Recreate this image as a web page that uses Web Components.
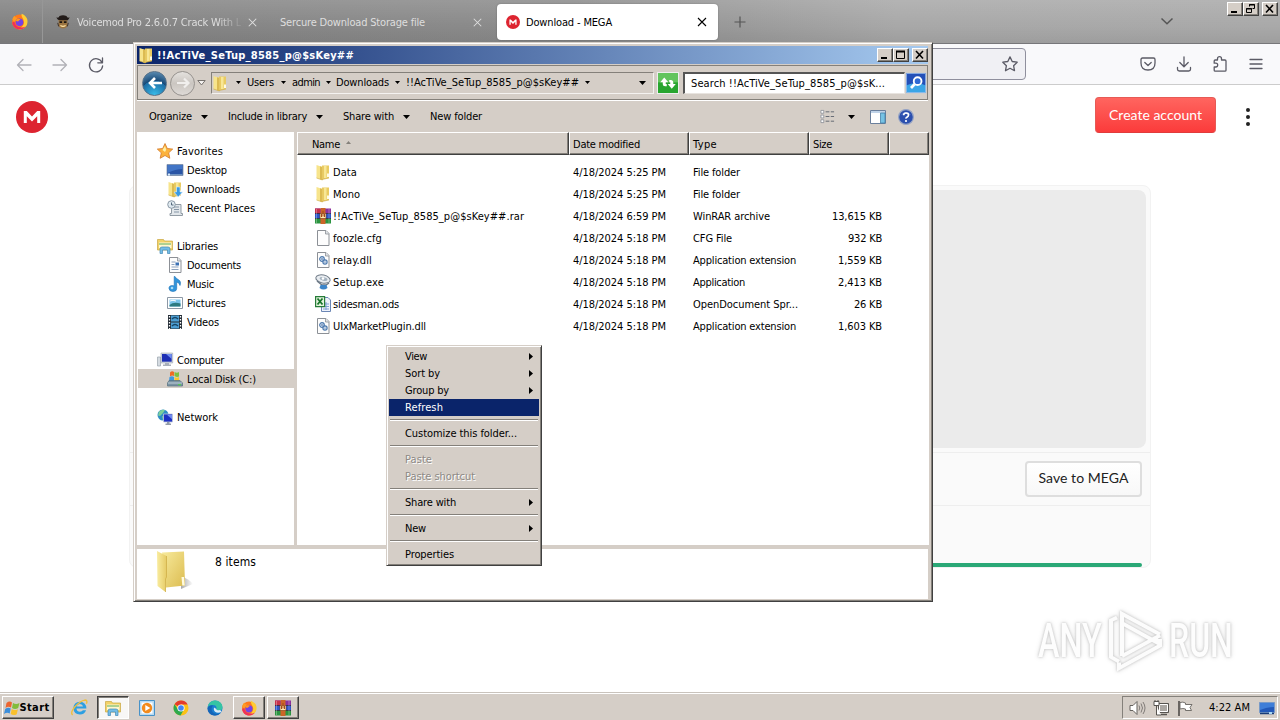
<!DOCTYPE html>
<html lang="en">
<head>
<meta charset="utf-8">
<title>Download - MEGA</title>
<style>
  :root {
    --face: #d5cec7;
    --face-shadow: #84807a;
    --face-dark: #404040;
    --select: #0a246a;
  }
  body {
    margin: 0;
    width: 1280px;
    height: 720px;
    overflow: hidden;
    position: relative;
    background: #fff;
    color: #000;
    font: 11px/14px "DejaVu Sans Condensed", "DejaVu Sans", sans-serif;
    font-stretch: condensed;
    display: flex;
    flex-direction: column;
  }
  explorer-window { position: absolute; left: 133px; top: 42px; z-index: 2; }
  context-menu { position: absolute; left: 386px; top: 345px; z-index: 3; }
  water-mark { position: absolute; left: 1038px; top: 607px; z-index: 1; }
</style>
</head>
<body>
  <browser-tabs></browser-tabs>
  <browser-toolbar></browser-toolbar>
  <mega-page></mega-page>
  <task-bar></task-bar>
  <explorer-window></explorer-window>
  <context-menu>
    <menu-item w="22" more>View</menu-item>
    <menu-item w="35" more>Sort by</menu-item>
    <menu-item w="44" more>Group by</menu-item>
    <menu-item w="38" active>Refresh</menu-item>
    <menu-line></menu-line>
    <menu-item w="112">Customize this folder...</menu-item>
    <menu-line></menu-line>
    <menu-item w="27" disabled>Paste</menu-item>
    <menu-item w="70" disabled>Paste shortcut</menu-item>
    <menu-line></menu-line>
    <menu-item w="51" more>Share with</menu-item>
    <menu-line></menu-line>
    <menu-item w="21" more>New</menu-item>
    <menu-line></menu-line>
    <menu-item w="49">Properties</menu-item>
  </context-menu>
  <water-mark></water-mark>

<script>
const FOLDER = `
  <path d="M7 1.500h7V14l-7 1.500z" fill="#e9cb62"/>
  <path d="M9 2h2.500v12H9z" fill="#f8e796"/>
  <path d="M1.500 1 7.500 3v13L1.500 14z" fill="#f7e48b"/>
  <path d="M5 2.200 7.500 3v13L5 15.200z" fill="#dcbb52"/>
  <path d="M1.500 14 7.500 16M7 15.500l7-1.500" stroke="#cba843" stroke-width=".6"/>
  <path d="M12 9.500h2v3.500h-2z" fill="#fffbe4"/>`;

const PAGE = `<path d="M2.500 .5h8.500l3 3v12H2.500z" fill="#fdfdfd" stroke="#8c9096"/><path d="M10.500.5v3.500h3.500" fill="#dfe3e8" stroke="#8c9096" stroke-width=".8"/>`;

const FIREFOX = `
  <circle cx="8" cy="8.500" r="7" fill="#ff7a1a"/>
  <path d="M10 .8c4.500 2 6.500 5.200 5.200 9.500-1 3.500-4.800 5.700-8.300 5C10 14 13 11 12 7.500 11.600 5 9.500 4 10 .8z" fill="#ffcc33"/>
  <path d="M1.300 6C2 3.500 3 3 3.500 2.500c.2 1.200 1 1.700 2.500 2L3 9z" fill="#ff9a22"/>
  <path d="M1.200 9c.4 4 3.400 6.500 7 6.500 2.300 0 4.300-1 5.500-2.800-4 2-9.500.8-10.500-4.700z" fill="#f0305a"/>
  <circle cx="8" cy="8.800" r="3.600" fill="#7542e5"/>
  <path d="M4.500 7c1-2 3.500-2 4.500-1-1.500.5-1.500 1.500-3 2z" fill="#ff9a22"/>`;

const WINRAR = `
  <path d="M0 .5h16v5H0z" fill="#8d2f9c"/><path d="M0 5.500h16v5H0z" fill="#2d55c8"/><path d="M0 10.500h16v5H0z" fill="#2b9440"/>
  <path d="M0 .5h5v5H0z" fill="#c5304c"/><path d="M0 5.500h16M0 10.500h16" stroke="#1b1b30" stroke-width=".7"/>
  <path d="M1.500 1v14M14 1v14" stroke="#ffffff" stroke-opacity=".3"/>
  <path d="M5.500 0h5v16h-5z" fill="#cc6428"/><path d="M5 5.500h6v5H5z" fill="#ffe9b0" stroke="#7a3610" stroke-width=".6"/>
  <path d="M6.500 6v3M8 3v5.500M9.500 6v3" stroke="#a2481a" stroke-width="1"/>`;

const LIBRARY = `
  <path d="M.5 1.500h6l1 1.500h8v9h-15z" fill="#f2d268" stroke="#c9a640" stroke-width=".7"/>
  <path d="M2 4.500h12.500v5.500H2z" fill="#fff7cf"/><path d="M2 6h12" stroke="#78b868" stroke-width="1.200"/>
  <path d="M3 15.500V11q0-2 2-2h6q2 0 2 2v4.500h-2.500V12h-5v3.500z" fill="#74bde6" stroke="#4289b8" stroke-width=".7"/>`;

const MEGA = `<circle cx="8" cy="8" r="8" fill="#dd2430"/><path d="M3.900 11V5h1.500L8 7.700 10.600 5h1.500v6h-1.500V7.600L8 10.200 5.400 7.600V11z" fill="#fff"/>`;

const GEAR_PAGE = PAGE + `
  <circle cx="7" cy="7" r="2.300" fill="#dbe7f5" stroke="#4d79ad" stroke-width="1.200"/><circle cx="7" cy="7" r=".8" fill="#355f94"/>
  <circle cx="10" cy="10" r="2.100" fill="#dbe7f5" stroke="#4d79ad" stroke-width="1.200"/><circle cx="10" cy="10" r=".6" fill="#355f94"/>`;

const LINE = 'fill="none" stroke="#5b5b66" stroke-width="1.300" stroke-linecap="round" stroke-linejoin="round"';

const ICONS = {
  folder: FOLDER,
  firefox: FIREFOX,
  winrar: WINRAR,
  library: LIBRARY,
  mega: MEGA,
  page: PAGE,
  dll: GEAR_PAGE,
  pirate: `<path d="M3 5.500h10v6.500q-1 3.500-5 3.500t-5-3.500z" fill="#9b7440"/><path d="M.5 2.500Q3 4 4 1q4-1.500 8 0 1 3 3.500 1.500-1 4-4 3.500h-7q-3 0-4-3.500z" fill="#221b19"/><path d="M4 7h3v2H4zM9 7h3v2H9z" fill="#17120e"/><path d="M5 12q3 2 6 0" stroke="#ffe3a2" stroke-width="1.200"/><path d="M2 9l1 4M14 9l-1 4" stroke="#33251c"/>`,
  back: `<path ${LINE} stroke-opacity=".45" d="M15 8H1.500M7 2.500 1.500 8 7 13.500"/>`,
  forward: `<path ${LINE} stroke-opacity=".45" d="M1 8h13.500M9 2.500 14.500 8 9 13.500"/>`,
  reload: `<path ${LINE} d="M14 5.500A6.600 6.600 0 1 0 14.600 9M14.500 1v4.800H9.800"/>`,
  star: `<path ${LINE} d="M8 .9l2.200 4.600 5 .7-3.600 3.500.9 5L8 12.300l-4.500 2.400.9-5L.8 6.200l5-.7z"/>`,
  pocket: `<path ${LINE} d="M2.500 2h11q1.500 0 1.500 1.500V7q0 7-7 7T1 7V3.500Q1 2 2.500 2zM4.800 6.500 8 9.500l3.200-3"/>`,
  download: `<path ${LINE} d="M8 .8v9.700M3.800 6.500 8 10.700l4.200-4.200M1.500 11.500v1.700q0 1.800 1.800 1.800h9.400q1.800 0 1.800-1.800v-1.700"/>`,
  puzzle: `<path ${LINE} d="M5.500 4V2.700a2 2 0 0 1 4 0V4H13q1 0 1 1v9.200q0 1-1 1H3.200q-1 0-1-1v-3.200h1.600a1.900 1.900 0 0 0 0-3.800H2.200V5q0-1 1-1z"/>`,
  lines: `<path ${LINE} d="M2 3.500h12M2 8h12M2 12.500h12"/>`,
  cross: `<path d="M4 4l8 8M12 4l-8 8" fill="none" stroke="currentColor" stroke-width="1.100"/>`,
  plus: `<path d="M8 2.500v11M2.500 8h11" fill="none" stroke="#555" stroke-width="1.200"/>`,
  chevron: `<path d="M2.500 5.500 8 10.700l5.500-5.200" fill="none" stroke="#555" stroke-width="1.500"/>`,
  favorite: `<path d="M8 .5l2.300 5 5.400.6-4 3.700 1.100 5.500L8 12.500l-4.800 2.800 1.100-5.500-4-3.700 5.400-.6z" fill="#fcb23c" stroke="#d3782a" stroke-width=".8"/><path d="M8 3 9.200 6.700 8 9 5.500 7z" fill="#fff1a8"/>`,
  desktop: `<path d="M0 2.500h16v11H0z" fill="#2a55a5" stroke="#7d8fa8" stroke-width=".8"/><path d="M.5 3h15v4q-7 0-15 4z" fill="#4275c6"/><path d="M.5 12.500h15" stroke="#6f93c2"/><path d="M1 11.500h2v2H1z" fill="#d8ecff"/>`,
  downloads: FOLDER + `<path d="M9.500 6h3.500v5h2.500l-4.300 5L7 11h2.500z" fill="#3a9ae4" stroke="#d5ecff" stroke-width=".6"/>`,
  recent: `<path d="M4.500 4.500h9.500v9h1.500v2H3v-2h1.500z" fill="#e2e7eb" stroke="#87929c" stroke-width=".9"/><path d="M7 7h5M7 9.500h5M7 12h5" stroke="#8797a7"/><circle cx="4.500" cy="4.500" r="3.800" fill="#e0eaf0" stroke="#8b99a6"/><path d="M4.500 2.500v2.500h2" fill="none" stroke="#55697c"/>`,
  documents: PAGE + `<path d="M4.500 5h4M4.500 7.500h3M4.500 10h7M4.500 12.500h7" stroke="#8ba1bd"/><path d="M8.500 5.500h3.500v3H8.500z" fill="#3b71b5"/>`,
  music: `<path d="M8 .5q.8 2 3.500 3.200Q14.500 5.500 13 9.500 12.500 6.500 9.700 6v6.500q0 3-3.700 3T2 12.500t3.500-3q1.300 0 1.700.4V.5z" fill="#3195dc" stroke="#1b70b5" stroke-width=".6"/><circle cx="5" cy="12" r="1.300" fill="#a5dcf8"/>`,
  pictures: `<path d="M.5 2.500h15v11H.5z" fill="#fff" stroke="#8c98a5"/><path d="M2.500 4.500h11v7h-11z" fill="#7cc4ea"/><path d="M2.500 10q4-3.500 11-1.500v3h-11z" fill="#2d7a80"/><path d="M3 6q3-1.500 6 0" stroke="#fff"/>`,
  videos: `<path d="M1 1h14v14H1z" fill="#252e37"/><path d="M4 1.500h8v6H4zM4 8.500h8v6H4z" fill="#4d9fd4"/><path d="M5 5q3-3 6 0M5 12q3-3 6 0" stroke="#174767" stroke-width="1.500" fill="none"/><path d="M2.500 2v13M13.500 2v13" stroke="#fff" stroke-width="1.300" stroke-dasharray="1.500 1.500"/>`,
  computer: `<path d="M.5 5h3v9h-3z" fill="#d5dbe1" stroke="#9aa3ac" stroke-width=".7"/><path d="M4 1h11.700v10H4z" fill="#d3d9e1" stroke="#a0a8b2" stroke-width=".6"/><path d="M5 2h9.700v7.700H5z" fill="#1d2fb4"/><path d="M9 2h5.700v5z" fill="#6f8df0"/><path d="M8 11h4v1.500h2V14H6v-1.500h2z" fill="#a9b0ba"/>`,
  disk: `<path d="M3 1.500q2-2 4-.5v4Q5 4 3 5.500z" fill="#f06b26"/><path d="M7.500 1Q10 2.500 12 1v4.500Q10 6.500 7.500 5z" fill="#7cc142"/><path d="M2.500 6Q5 4.500 7 6v4H2z" fill="#4098e0"/><path d="M7.500 6q2 1.500 4.500 0v4H7.500z" fill="#fbc72e"/><path d="M2 9.500h11l2.500 2.500v3H.5v-3z" fill="#7b93a3" stroke="#55707e" stroke-width=".7"/><path d="M1 12h14" stroke="#bfd0d9"/><path d="M11 13h3v1.300h-3z" fill="#52d04d"/>`,
  network: `<circle cx="6" cy="6" r="5.500" fill="#2f8ec6"/><path d="M2 2.500q3-2.500 6-1.500L6 4 3 7 1 6.500zM5 7l3 1-2 3.500z" fill="#7ccf9a"/><path d="M6.500 5h9v8h-9z" fill="#1d2fc4" stroke="#c3cbd8" stroke-width=".8"/><path d="M10 5.700h5v4.500z" fill="#718cf0"/><path d="M10 13h2.500v1.500H14V16H8.500v-1.500H10z" fill="#929ca8"/>`,
  setup: `<ellipse cx="8" cy="5" rx="7.300" ry="4" fill="#e9edf1" stroke="#727d89" transform="rotate(12 8 5)"/><ellipse cx="8.500" cy="4.800" rx="4" ry="1.800" fill="#a5b3c0" transform="rotate(12 8 5)"/><circle cx="8" cy="4.500" r="1.300" fill="#fff"/><path d="M2 7l5 4h4l3-2" fill="none" stroke="#6c7986" stroke-width="1.500"/><path d="M5.500 11h6l1 3q-4 3-8 0z" fill="#3c84c8"/>`,
  ods: `<path d="M6.500 1.500H13l2.500 2.500v11.500h-9z" fill="#eef2fb" stroke="#6b86b5"/><path d="M8 8h6M8 10.500h6M8 13h6M11 6v8" stroke="#7fa0d3"/><path d="M.6.600h9v10h-9z" fill="#e2f2dc" stroke="#267c38" stroke-width="1.200"/><path d="M2.500 2.500l5 6M7.500 2.500l-5 6" stroke="#18752a" stroke-width="1.800"/>`,
  views: `<path d="M1 1.500h3v3H1zM1 6.500h3v3H1zM1 11.500h3v3H1z" fill="#fff" stroke="#80858f" stroke-width=".8"/><path d="M6 3h4M11.500 3H15M6 8h4M11.500 8H15M6 13h4M11.500 13H15" stroke="#5f6570"/>`,
  pane: `<path d="M.5 1.500h15v13H.5z" fill="#fff" stroke="#6a7f9c"/><path d="M1 2h14v2H1z" fill="#c0d3e8"/><path d="M10.500 4h4.500v10h-4.500z" fill="#76c2e4" stroke="#4581a8" stroke-width=".8"/>`,
  help: `<circle cx="8" cy="8" r="7.400" fill="#2b4fae" stroke="#97a5c5" stroke-width="1.200"/><path d="M3 6q5-6 10 0-5-2-10 0z" fill="#6c8ad8"/><path d="M5.700 6.300q0-2.300 2.400-2.300t2.400 2q0 1.300-1.300 2T8 9.700" fill="none" stroke="#fff" stroke-width="1.700"/><circle cx="8" cy="12" r="1.100" fill="#fff"/>`,
  refresh: `<path d="M0 0h16v16H0z" fill="#28a52f"/><path d="M0 0h16v7.500H0z" fill="#62c45d"/><path d="M5 3.500 1.800 7.300h2v1.200q0 2 2 2h1.200V8.700H6.200V7.300h2z" fill="#fff"/><path d="M11 12.500l3.200-3.800h-2V7.500q0-2-2-2H9v1.800h.8v1.400h-2z" fill="#fff"/>`,
  search: `<path d="M0 0h16v16H0z" fill="#2450b8"/><path d="M0 10q8-4 16 0v6H0z" fill="#3ba5e6"/><circle cx="9.300" cy="6.500" r="3.100" fill="#2f6ad4" stroke="#fff" stroke-width="1.500"/><path d="M6.800 9 4 12" stroke="#fff" stroke-width="2.200"/><path d="M.3.3h15.400v15.400H.3z" stroke="#9fc0ec" stroke-width=".7"/>`,
  windows: `<path d="M2.500 3Q5.500.5 8 2.500L7 7.500Q4 6 1.500 8z" fill="#ec6530"/><path d="M9 3q3 2 6.500 0l-1.300 5Q11 10 8 8z" fill="#82bc3c"/><path d="M1.200 9Q4 7 6.700 8.500l-1 5Q3 12 0 14z" fill="#3b8edb"/><path d="M7.700 9q3 2 6.200.2l-1.200 5Q9.500 16 6.700 14z" fill="#f9c12e"/>`,
  ie: `<path d="M14.500 9H5.200q.3 3 3.200 3.100 2 0 2.800-1.400h3Q12.800 14.700 8.400 14.700 2.500 14.300 2.200 8.500 2.500 2.700 8.400 2.500q6 .3 6.100 6.500zM5.300 7h6Q11 4.900 8.400 4.800 5.700 4.900 5.300 7z" fill="#2c9fe2"/><path d="M1.500 15Q-1 13 3.500 7.500 9 1.500 13 1q3 0 1.500 3.500" fill="none" stroke="#efbf3d" stroke-width="1.300"/>`,
  player: `<path d="M.5 .5h15v15H.5z" fill="#b7daf2" stroke="#4892c8"/><path d="M2.500 2.500h11v11h-11z" fill="#fff"/><circle cx="8" cy="8" r="5.200" fill="#f28a1c"/><path d="M6.300 5v6l5-3z" fill="#fff"/>`,
  chrome: `<circle cx="8" cy="8" r="7.500" fill="#fbc116"/><path d="M8 8 1.500 4.300A7.500 7.500 0 0 1 14.700 4.600H8z" fill="#e33b2e"/><path d="M1.500 4.300A7.500 7.500 0 0 0 7.500 15.500L11 9.500 8 8 5 9.500z" fill="#2da94f"/><circle cx="8" cy="8" r="3.600" fill="#fff"/><circle cx="8" cy="8" r="2.800" fill="#4285f4"/>`,
  edge: `<circle cx="8" cy="8" r="7.500" fill="#1c7fd0"/><path d="M.6 7Q2 .5 8 .5q7 .5 7.500 6.500 0 3.500-4 3.500-2.500 0-2-1.500Q10 5 6 5 2 5 .6 7z" fill="#36c4a4"/><path d="M.5 8Q2 4.500 6 5.500 3 9 6 12.500q3 2.500 7.500.5Q11 16 7 15.500.5 14.500.5 8z" fill="#1565b8"/><path d="M7 7.500q-1 3.500 2.500 5 3 .5 5-.8L13.200 10Q9 11 9.400 9z" fill="#fff" fill-opacity=".85"/>`,
  volume: `<path d="M1 5.500h3L8 1.500v13l-4-4H1z" fill="#fff" stroke="#66635f"/><path d="M10 5.500q1.500 2.500 0 5M12 3.500q3 4.500 0 9M14 2q4 6 0 12" fill="none" stroke="#77736f" stroke-width=".9"/>`,
  wired: `<path d="M5.500 3.500h10v9h-10z" fill="#aaa6a2" stroke="#575450"/><path d="M6.500 4.500h8v7h-8z" fill="none" stroke="#fff"/><path d="M8 14.500h6" stroke="#575450" stroke-width="1.500"/><path d="M1 1.500h5v4H1zM3.500 5.500V15H8M2 0v2M5 0v2" fill="#fff" stroke="#575450"/>`,
  flag: `<path d="M2 1v15" stroke="#4e4b48" stroke-width="1.600"/><path d="M3 2.500q3-1 5.500.5v1.500h6.500l-2 3 1.500 3H8.500V9Q6 8 3 9z" fill="#fff" stroke="#66635f" stroke-width=".9"/>`,
  screen: `<path d="M.5 2.500h15v10H.5z" fill="#2258b8" stroke="#789ac8"/><path d="M1 3h14v4Q8 7 1 10z" fill="#3f7ed8"/><path d="M1 13.500h14" stroke="#183c78" stroke-width="1.500"/><path d="M10 12h3v2h-3z" fill="#a8d8f5"/>`
};

/** Icon from the set above, 16px unless size is given. */
class UiIcon extends HTMLElement {
  connectedCallback() {
    if (this.shadowRoot) return;
    const size = this.getAttribute('size') || 16;
    this.attachShadow({ mode: 'open' }).innerHTML = `
      <style>
        :host { display: inline-flex; flex: none; width: ${size}px; height: ${size}px; }
        svg { display: block; width: 100%; height: 100%; overflow: visible; }
      </style>
      <svg viewBox="0 0 16 16" fill="none">${ICONS[this.getAttribute('name')] || ''}</svg>`;
  }
}

/** Single line label, tracked so that it takes exactly w pixels. */
class FitText extends HTMLElement {
  connectedCallback() {
    if (this.shadowRoot) return;
    this.attachShadow({ mode: 'open' }).innerHTML = `
      <style>
        :host { display: inline-block; flex: none; white-space: nowrap; }
        span { display: inline-block; white-space: nowrap; }
      </style>
      <span><slot></slot></span>`;
    this.fit();
  }

  fit() {
    const w = Number(this.getAttribute('w'));
    const span = this.shadowRoot.querySelector('span');
    const natural = span.getBoundingClientRect().width;
    const count = this.textContent.trim().length;
    if (!w || !natural || !count) return;
    span.style.letterSpacing = `${(w - natural) / count}px`;
    this.style.width = `${w}px`;
  }
}

/** Small black arrow, dir = down | small | right | up. */
class UiArrow extends HTMLElement {
  connectedCallback() {
    if (this.shadowRoot) return;
    const shapes = {
      down: ['0 0 8 4', 'M0 0h7L3.500 4z'],
      small: ['0 0 5 3', 'M0 0h5L2.500 3z'],
      right: ['0 0 4 7', 'M0 0l4 3.500L0 7z'],
      up: ['0 0 5 3', 'M0 3h5L2.500 0z']
    };
    const [box, d] = shapes[this.getAttribute('dir') || 'down'];
    const [, , w, h] = box.split(' ');
    this.attachShadow({ mode: 'open' }).innerHTML = `
      <style>
        :host { display: block; flex: none; width: ${w}px; height: ${h}px; }
        svg { display: block; }
      </style>
      <svg width="${w}" height="${h}" viewBox="${box}"><path d="${d}" fill="currentColor"/></svg>`;
  }
}

/** Minimize, maximize / restore and close buttons of a classic window. */
class CaptionButtons extends HTMLElement {
  connectedCallback() {
    if (this.shadowRoot) return;
    const middle = this.hasAttribute('restore')
      ? '<path d="M5.500 3.500v-2h5v4h-2M5 2h6M2.500 5.500h5v4h-5zM2 6h6" fill="none" stroke="#000"/>'
      : '<path d="M2.500 2.500h8v7h-8zM2 2h9" fill="none" stroke="#000"/><path d="M2 2h9v1.500H2z" fill="#000"/>';
    this.attachShadow({ mode: 'open' }).innerHTML = `
      <style>
        :host { display: flex; flex: none; height: 14px; }
        b {
          box-sizing: border-box; width: 16px; height: 14px; background: var(--face);
          border: 1px solid; border-color: #fff #404040 #404040 #fff;
          box-shadow: inset -1px -1px #84807a;
        }
        b:last-child { margin-left: 3px; }
        svg { display: block; }
      </style>
      <b><svg width="13" height="12"><path d="M3 8h6v2H3z"/></svg></b>
      <b><svg width="13" height="12">${middle}</svg></b>
      <b><svg width="13" height="12"><path d="M3 2l7 7.500M10 2 3 9.500" stroke="#000" stroke-width="1.600"/></svg></b>`;
  }
}

class BrowserTabs extends HTMLElement {
  connectedCallback() {
    this.attachShadow({ mode: 'open' }).innerHTML = `
      <style>
        :host {
          display: flex; flex: none; box-sizing: border-box; height: 44px;
          border-bottom: 1px solid #77777a;
          background: linear-gradient(#fff2, #0000 60%, #0001), linear-gradient(90deg, #828282, #8c8c8c 45%, #a8a8a8 70%, #a9a9a9);
          color: #dedede;
        }
        .pin { width: 43px; display: flex; align-items: center; justify-content: center; border-right: 1px solid #979797; box-sizing: border-box; padding-right: 3px; }
        .tab { display: flex; align-items: center; box-sizing: border-box; margin: 4px 0; height: 36px; }
        .tab ui-icon:last-child { margin-left: auto; }
        .tab fit-text { padding-top: 2px; }
        .one { width: 223px; padding: 0 6px 0 13px; }
        .one fit-text { margin-left: 7px; overflow: hidden; -webkit-mask: linear-gradient(90deg, #000 86%, #0002); mask: linear-gradient(90deg, #000 86%, #0002); }
        .two { width: 225px; padding: 0 6px 0 14px; margin-right: 6px; }
        .on { width: 221px; background: #fff; color: #000; border-radius: 4px; padding: 0 8px 0 9px; box-shadow: 0 0 2px #0004; }
        .on fit-text { margin-left: 6px; }
        .add { margin: 14px 0 0 14px; }
        .list { margin: 13px 0 0 auto; }
        caption-buttons { margin: 2px 2px 0 52px; }
      </style>
      <div class="pin"><ui-icon name="firefox" size="17"></ui-icon></div>
      <div class="tab one"><ui-icon name="pirate" size="14"></ui-icon><fit-text w="164">Voicemod Pro 2.6.0.7 Crack With L</fit-text><ui-icon name="cross" size="15"></ui-icon></div>
      <div class="tab two"><fit-text w="145">Sercure Download Storage file</fit-text><ui-icon name="cross" size="15"></ui-icon></div>
      <div class="tab on"><ui-icon name="mega" size="14"></ui-icon><fit-text w="86">Download - MEGA</fit-text><ui-icon name="cross"></ui-icon></div>
      <ui-icon class="add" name="plus"></ui-icon>
      <ui-icon class="list" name="chevron"></ui-icon>
      <caption-buttons restore></caption-buttons>`;
  }
}

class BrowserToolbar extends HTMLElement {
  connectedCallback() {
    this.attachShadow({ mode: 'open' }).innerHTML = `
      <style>
        :host {
          display: flex; flex: none; align-items: center; box-sizing: border-box; height: 41px;
          padding: 0 16px; background: #f9f9fb; border-bottom: 1px solid #ccc;
        }
        .nav, .tools { display: flex; gap: 20px; }
        .nav { padding-top: 1px; }
        .url {
          flex: 1; box-sizing: border-box; height: 32px; margin: 0 114px 0 132px; padding-right: 7px;
          display: flex; align-items: center; justify-content: flex-end;
          border: 1px solid #8f8f9d; border-radius: 4px; background: #f0f0f4;
        }
      </style>
      <div class="nav"><ui-icon name="back"></ui-icon><ui-icon name="forward"></ui-icon><ui-icon name="reload"></ui-icon></div>
      <div class="url"><ui-icon name="star"></ui-icon></div>
      <div class="tools"><ui-icon name="pocket"></ui-icon><ui-icon name="download"></ui-icon><ui-icon name="puzzle"></ui-icon><ui-icon name="lines"></ui-icon></div>`;
  }
}

class MegaPage extends HTMLElement {
  connectedCallback() {
    this.attachShadow({ mode: 'open' }).innerHTML = `
      <style>
        :host { display: block; flex: 1; min-height: 0; background: #fff; font: 14px/18px Lato, sans-serif; }
        header { display: flex; align-items: center; height: 64px; padding: 0 30px 0 16px; }
        .create {
          margin-left: auto; box-sizing: border-box; width: 121px; height: 36px; margin-top: -4px; padding-bottom: 1px;
          display: flex; align-items: center; justify-content: center; border-radius: 4px;
          background: linear-gradient(#ff655f, #fb3b3b); border: 1px solid #e65a55; border-bottom-color: #e03c3c; color: #fff;
        }
        .dots { display: grid; gap: 3px; margin-left: 30px; }
        .dots i { width: 4px; height: 4px; border-radius: 2px; background: #222; }
        main { box-sizing: border-box; width: 1022px; height: 383px; margin: 36px 0 0 129px; border: 1px solid #f2f2f2; border-radius: 8px; background: #fafafa; display: flex; flex-direction: column; overflow: hidden; }
        .preview { height: 258px; margin: 4px 4px 4px; border-radius: 8px; background: #ebebeb; flex: none; }
        .actions { height: 52px; border: solid #eee; border-width: 1px 0; display: flex; align-items: center; justify-content: flex-end; padding-right: 8px; flex: none; }
        .save { box-sizing: border-box; width: 117px; height: 36px; padding-bottom: 2px; display: flex; align-items: center; justify-content: center; border: 2px solid #dedede; border-radius: 4px; background: linear-gradient(#fff, #f8f8f8); color: #222; }
        .bar { height: 4px; margin: auto 8px 0; border-radius: 2px; background: #2aa876; }
      </style>
      <header>
        <ui-icon name="mega" size="32"></ui-icon>
        <div class="create"><fit-text w="93">Create account</fit-text></div>
        <div class="dots"><i></i><i></i><i></i></div>
      </header>
      <main>
        <div class="preview"></div>
        <div class="actions"><div class="save"><fit-text w="90">Save to MEGA</fit-text></div></div>
        <div class="bar"></div>
      </main>`;
  }
}

/** Entry of the explorer's navigation tree. */
class NavItem extends HTMLElement {
  connectedCallback() {
    const w = this.getAttribute('w');
    this.attachShadow({ mode: 'open' }).innerHTML = `
      <style>
        :host { display: flex; align-items: center; box-sizing: border-box; height: 19px; margin-left: 1px; padding-left: 19px; gap: 4px; }
        :host([child]) { padding-left: 29px; }
        :host([selected]) { background: var(--face); }
        :host([group]) { margin-top: 19px; }
        fit-text { padding-top: 2px; }
      </style>
      <ui-icon name="${this.getAttribute('icon')}"></ui-icon>
      <fit-text w="${w}">${this.textContent}</fit-text>`;
  }
}

/** Row of the file list: name, date, type and size. */
class FileRow extends HTMLElement {
  connectedCallback() {
    const at = (name) => this.getAttribute(name) || '';
    this.attachShadow({ mode: 'open' }).innerHTML = `
      <style>
        :host { display: grid; grid-template-columns: 276px 120px 120px 69px; align-items: center; height: 22px; }
        .name { display: flex; align-items: center; padding-left: 18px; gap: 2px; }
        .size { justify-self: end; }
        fit-text { padding-top: 2px; }
      </style>
      <div class="name"><ui-icon name="${at('icon')}"></ui-icon><fit-text w="${at('w')}">${this.textContent}</fit-text></div>
      <fit-text w="93">${at('date')}</fit-text>
      <fit-text w="${at('tw')}">${at('type')}</fit-text>
      ${at('size') ? `<fit-text class="size" w="${at('sw')}">${at('size')}</fit-text>` : ''}`;
  }
}

class ExplorerWindow extends HTMLElement {
  connectedCallback() {
    this.attachShadow({ mode: 'open' }).innerHTML = `
      <style>
        :host {
          display: flex; flex-direction: column; box-sizing: border-box; width: 800px; height: 560px;
          padding: 2px 2px 1px; background: var(--face); border: 1px solid;
          border-color: var(--face) var(--face-dark) var(--face-dark) var(--face);
          box-shadow: inset 1px 1px #fff, inset -1px -1px #84807a;
        }
        .title {
          height: 18px; margin: 1px 2px 0 1px; padding: 0 0 0 1px; display: flex; align-items: center;
          background: linear-gradient(90deg, #0a246a, #a6caf0); color: #fff; font-weight: bold;
        }
        .title fit-text { margin-left: 3px; padding-top: 1px; }
        caption-buttons { margin-left: auto; }
        .address {
          box-sizing: border-box; height: 35px; margin: 1px 2px 0 1px; padding: 0 0 0 4px; display: flex; align-items: center;
          border: 1px solid #84807a; box-shadow: 0 1px #fff;
        }
        .round { box-sizing: border-box; width: 25px; height: 25px; margin-top: 1px; border-radius: 50%; flex: none; display: grid; place-items: center; border: 1px solid #557088; }
        .go { background: radial-gradient(circle at 50% 100%, #39bdea, #1d6ca4 55%, #184a78 56%, #6c9cc0); }
        .no { margin-left: 3px; background: linear-gradient(#e4e1de, #cbc6c1 50%, #dedad6); border-color: #96928e; }
        .tri { margin-left: 2px; color: #777; flex: none; }
        .crumbs {
          box-sizing: border-box; width: 443px; height: 22px; margin-left: 5px; padding: 0 6px 0 0; display: flex; align-items: center;
          border: 1px solid; border-color: #84807a #f4f2f0 #f4f2f0 #84807a;
        }
        .crumbs ui-icon { margin-right: 1px; }
        .crumbs ui-arrow { margin: 0 6px; }
        .crumbs ui-arrow.end { margin: 0 0 0 auto; }
        .refresh { margin-left: 3px; border: 1px solid #eee; }
        .query {
          box-sizing: border-box; width: 222px; height: 22px; margin-left: 4px; padding-left: 6px; display: flex; align-items: center; background: #fff;
          border: solid; border-width: 2px 1px 1px 2px; border-color: #555 #e8e4e0 #e8e4e0 #555;
        }
        .query fit-text { padding-top: 1px; }
        .find { margin-left: 1px; }
        .commands { height: 31px; display: flex; align-items: center; padding: 1px 16px 0 13px; flex: none; }
        .commands fit-text + ui-arrow { margin: 0 19px 0 9px; }
        .views { margin-left: auto; }
        .commands ui-icon + ui-arrow { margin: 0 14px 0 13px; }
        .help { margin-left: 12px; }
        .body { display: flex; flex: 1; min-height: 0; margin: 0 2px 0 1px; }
        nav { width: 157px; background: #fff; flex: none; padding-top: 9px; box-sizing: border-box; }
        .files { flex: 1; margin-left: 3px; background: #fff; }
        .head { display: grid; grid-template-columns: 272px 120px 120px 80px 40px; height: 23px; }
        .head div {
          box-sizing: border-box; display: flex; align-items: center; padding: 2px 0 0 3px; background: var(--face);
          border: 1px solid; border-color: #fff var(--face-dark) var(--face-dark) #fff; box-shadow: inset -1px -1px #84807a;
        }
        .head div:first-child { padding-left: 14px; }
        .head ui-arrow { margin: -4px 0 0 6px; color: #84807a; }
        .rows { padding-top: 6px; }
        .details { height: 50px; margin: 4px 2px 1px 1px; background: #fff; display: flex; flex: none; }
        .details svg { margin: 1px 0 0 16px; }
        .details fit-text { margin: 6px 0 0 20px; font-size: 12px; }
      </style>
      <div class="title"><ui-icon name="folder"></ui-icon><fit-text w="197">!!AcTiVe_SeTup_8585_p@$sKey##</fit-text><caption-buttons></caption-buttons></div>
      <div class="address">
        <div class="round go"><svg width="16" height="16"><path d="M15 8H3M8 3 3 8l5 5" fill="none" stroke="#fff" stroke-width="2.600"/></svg></div>
        <div class="round no"><svg width="16" height="16"><path d="M2 8h11M9 3.500 13.500 8 9 12.500" fill="none" stroke="#f1efed" stroke-width="2.200"/></svg></div>
        <svg class="tri" width="9" height="6"><path d="M.8.500h7.400L4.500 5z" fill="#f4f2f0" stroke="#77736f"/></svg>
        <div class="crumbs">
          <ui-icon name="folder"></ui-icon>
          <ui-arrow dir="small" style="margin-left:7px"></ui-arrow><fit-text w="27">Users</fit-text>
          <ui-arrow dir="small" style="margin-left:7px"></ui-arrow><fit-text w="28">admin</fit-text>
          <ui-arrow dir="small" style="margin-right:5px"></ui-arrow><fit-text w="53">Downloads</fit-text>
          <ui-arrow dir="small"></ui-arrow><fit-text w="173">!!AcTiVe_SeTup_8585_p@$sKey##</fit-text>
          <ui-arrow dir="small"></ui-arrow>
          <ui-arrow class="end"></ui-arrow>
        </div>
        <ui-icon class="refresh" name="refresh" size="20"></ui-icon>
        <div class="query"><fit-text w="194">Search !!AcTiVe_SeTup_8585_p@$sK...</fit-text></div>
        <ui-icon class="find" name="search" size="20"></ui-icon>
      </div>
      <div class="commands">
        <fit-text w="43">Organize</fit-text><ui-arrow></ui-arrow>
        <fit-text w="79">Include in library</fit-text><ui-arrow></ui-arrow>
        <fit-text w="51">Share with</fit-text><ui-arrow></ui-arrow>
        <fit-text w="52">New folder</fit-text>
        <ui-icon class="views" name="views" size="15"></ui-icon><ui-arrow></ui-arrow>
        <ui-icon name="pane"></ui-icon><ui-icon class="help" name="help"></ui-icon>
      </div>
      <div class="body">
        <nav>
          <nav-item icon="favorite" w="46">Favorites</nav-item>
          <nav-item child icon="desktop" w="40">Desktop</nav-item>
          <nav-item child icon="downloads" w="53">Downloads</nav-item>
          <nav-item child icon="recent" w="68">Recent Places</nav-item>
          <nav-item group icon="library" w="41">Libraries</nav-item>
          <nav-item child icon="documents" w="54">Documents</nav-item>
          <nav-item child icon="music" w="27">Music</nav-item>
          <nav-item child icon="pictures" w="39">Pictures</nav-item>
          <nav-item child icon="videos" w="32">Videos</nav-item>
          <nav-item group icon="computer" w="47">Computer</nav-item>
          <nav-item child selected icon="disk" w="69">Local Disk (C:)</nav-item>
          <nav-item group icon="network" w="41">Network</nav-item>
        </nav>
        <div class="files">
          <div class="head">
            <div><fit-text w="28">Name</fit-text><ui-arrow dir="up"></ui-arrow></div>
            <div><fit-text w="67">Date modified</fit-text></div>
            <div><fit-text w="24">Type</fit-text></div>
            <div><fit-text w="19">Size</fit-text></div>
            <div></div>
          </div>
          <div class="rows">
            <file-row icon="folder" w="24" date="4/18/2024 5:25 PM" type="File folder" tw="47">Data</file-row>
            <file-row icon="folder" w="27" date="4/18/2024 5:25 PM" type="File folder" tw="47">Mono</file-row>
            <file-row icon="winrar" w="191" date="4/18/2024 6:59 PM" type="WinRAR archive" tw="77" size="13,615 KB" sw="50">!!AcTiVe_SeTup_8585_p@$sKey##.rar</file-row>
            <file-row icon="page" w="49" date="4/18/2024 5:18 PM" type="CFG File" tw="39" size="932 KB" sw="34">foozle.cfg</file-row>
            <file-row icon="dll" w="39" date="4/18/2024 5:18 PM" type="Application extension" tw="103" size="1,559 KB" sw="44">relay.dll</file-row>
            <file-row icon="setup" w="51" date="4/18/2024 5:18 PM" type="Application" tw="52" size="2,413 KB" sw="44">Setup.exe</file-row>
            <file-row icon="ods" w="66" date="4/18/2024 5:18 PM" type="OpenDocument Spr..." tw="105" size="26 KB" sw="28">sidesman.ods</file-row>
            <file-row icon="dll" w="93" date="4/18/2024 5:18 PM" type="Application extension" tw="103" size="1,603 KB" sw="44">UIxMarketPlugin.dll</file-row>
          </div>
        </div>
      </div>
      <div class="details">
        <svg width="42" height="44" viewBox="0 0 42 44">
          <defs>
            <linearGradient id="a"><stop stop-color="#f9ec9f"/><stop offset="1" stop-color="#e6cb66"/></linearGradient>
            <linearGradient id="b" x2="1" y2="1"><stop stop-color="#f7ea9c"/><stop offset="1" stop-color="#dcbc50"/></linearGradient>
            <linearGradient id="c"><stop stop-color="#aaa"/><stop offset="1" stop-color="#fff"/></linearGradient>
          </defs>
          <path d="M28 26q8 3 12 8l-12 5z" fill="url(#c)"/>
          <path d="M9 2.500 31 1.500l1 34-19 2z" fill="url(#b)"/>
          <path d="M4 1 13.500 6v21l-1 2v13L4.500 36z" fill="url(#a)"/>
          <path d="M13.500 6v21l-1 2v13" fill="none" stroke="#cfae48" stroke-width=".8"/>
          <path d="M28.500 27h2.500l.8 8.500h-2.500z" fill="#fffbe0"/>
        </svg>
        <fit-text w="41">8 items</fit-text>
      </div>`;
  }
}

class ContextMenu extends HTMLElement {
  connectedCallback() {
    this.attachShadow({ mode: 'open' }).innerHTML = `
      <style>
        :host {
          display: block; box-sizing: border-box; width: 156px; height: 221px; padding: 2px; background: var(--face);
          border: 1px solid; border-color: var(--face) var(--face-dark) var(--face-dark) var(--face);
          box-shadow: inset 1px 1px #fff, inset -1px -1px #84807a;
        }
      </style>
      <slot></slot>`;
  }
}

class MenuItem extends HTMLElement {
  connectedCallback() {
    this.attachShadow({ mode: 'open' }).innerHTML = `
      <style>
        :host { display: flex; align-items: center; height: 17px; padding: 0 6px 0 16px; }
        :host([active]) { background: var(--select); color: #fff; }
        :host([disabled]) { color: #8d8985; text-shadow: 1px 1px #fff; }
        ui-arrow { margin-left: auto; }
      </style>
      <fit-text w="${this.getAttribute('w')}">${this.textContent}</fit-text>
      ${this.hasAttribute('more') ? '<ui-arrow dir="right"></ui-arrow>' : ''}`;
  }
}

class MenuLine extends HTMLElement {
  connectedCallback() {
    this.attachShadow({ mode: 'open' }).innerHTML = `
      <style>
        :host { display: block; box-sizing: border-box; height: 9px; padding: 3px 1px 0; }
        hr { margin: 0; border: solid; border-width: 1px 0; border-color: #84807a #fff #fff; }
      </style>
      <hr>`;
  }
}

class WaterMark extends HTMLElement {
  connectedCallback() {
    this.attachShadow({ mode: 'open' }).innerHTML = `
      <style>
        :host {
          display: flex; align-items: center; width: 200px; height: 68px; font: 49px/68px "Liberation Sans Narrow", Roboto, sans-serif;
          color: #fdfdfd; filter: drop-shadow(0 0 1px #c4c4c4) drop-shadow(0 0 2px #ddd);
        }
        span { display: block; width: 63px; white-space: nowrap; }
        b { display: block; font-weight: 500; transform-origin: 0 50%; }
        svg { flex: none; margin: 0 3px; }
      </style>
      <span><b>ANY</b></span>
      <svg width="62" height="62" viewBox="0 0 62 66" preserveAspectRatio="none" fill="none" stroke="#fcfcfc" stroke-width="4">
        <path d="M13 8 7 11v39l8 5M18 49V4l38 22M18 14l34 20v-6M18 49l38-22M15 56v6l41-24v-7"/>
      </svg>
      <span><b>RUN</b></span>`;
    for (const b of this.shadowRoot.querySelectorAll('b')) {
      b.style.width = 'max-content';
      b.style.transform = `scaleX(${64 / b.offsetWidth})`;
    }
  }
}

class TaskBar extends HTMLElement {
  connectedCallback() {
    this.attachShadow({ mode: 'open' }).innerHTML = `
      <style>
        :host {
          display: flex; flex: none; box-sizing: border-box; height: 28px; padding: 2px 2px 0; background: var(--face);
          border-top: 1px solid #c9c3bc; box-shadow: inset 0 1px #fff;
        }
        .button {
          box-sizing: border-box; width: 32px; height: 23px; margin-top: 1px; display: flex; align-items: center; justify-content: center;
          border: 1px solid; border-color: #fff var(--face-dark) var(--face-dark) #fff; box-shadow: inset -1px -1px #84807a;
        }
        .start { width: 52px; font-weight: bold; gap: 0; padding-right: 3px; }
        .quick { width: 34px; display: grid; place-items: center; }
        .ie { width: 40px; margin-left: 5px; }
        .pressed { margin-left: -2px; background: #f8f7f6; border-color: var(--face-dark) #fff #fff var(--face-dark); box-shadow: inset 1px 1px #84807a; }
        .pressed + .quick { margin-left: 1px; }
        .app { margin-left: 2px; }
        .quick + .app { margin-left: 1px; }
        .tray {
          box-sizing: border-box; width: 156px; height: 23px; margin: 1px 0 0 auto; padding: 0 1px 0 6px; display: flex; align-items: center;
          border: 1px solid; border-color: #84807a #fff #fff #84807a;
        }
        .tray ui-icon + ui-icon { margin-left: 8px; }
        .tray fit-text { margin: 0 9px 0 16px; }
      </style>
      <div class="button start"><ui-icon name="windows"></ui-icon><fit-text w="30">Start</fit-text></div>
      <div class="quick ie"><ui-icon name="ie" size="17"></ui-icon></div>
      <div class="button pressed"><ui-icon name="library"></ui-icon></div>
      <div class="quick"><ui-icon name="player"></ui-icon></div>
      <div class="quick"><ui-icon name="chrome"></ui-icon></div>
      <div class="quick"><ui-icon name="edge"></ui-icon></div>
      <div class="button app"><ui-icon name="firefox"></ui-icon></div>
      <div class="button app"><ui-icon name="winrar"></ui-icon></div>
      <div class="tray">
        <ui-icon name="volume"></ui-icon><ui-icon name="wired"></ui-icon><ui-icon name="flag"></ui-icon>
        <fit-text w="41">4:22 AM</fit-text><ui-icon name="screen"></ui-icon>
      </div>`;
  }
}

customElements.define('ui-icon', UiIcon);
customElements.define('fit-text', FitText);
customElements.define('ui-arrow', UiArrow);
customElements.define('caption-buttons', CaptionButtons);
customElements.define('nav-item', NavItem);
customElements.define('file-row', FileRow);
customElements.define('menu-item', MenuItem);
customElements.define('menu-line', MenuLine);
customElements.define('context-menu', ContextMenu);
customElements.define('browser-tabs', BrowserTabs);
customElements.define('browser-toolbar', BrowserToolbar);
customElements.define('mega-page', MegaPage);
customElements.define('explorer-window', ExplorerWindow);
customElements.define('water-mark', WaterMark);
customElements.define('task-bar', TaskBar);
</script>
</body>
</html>
